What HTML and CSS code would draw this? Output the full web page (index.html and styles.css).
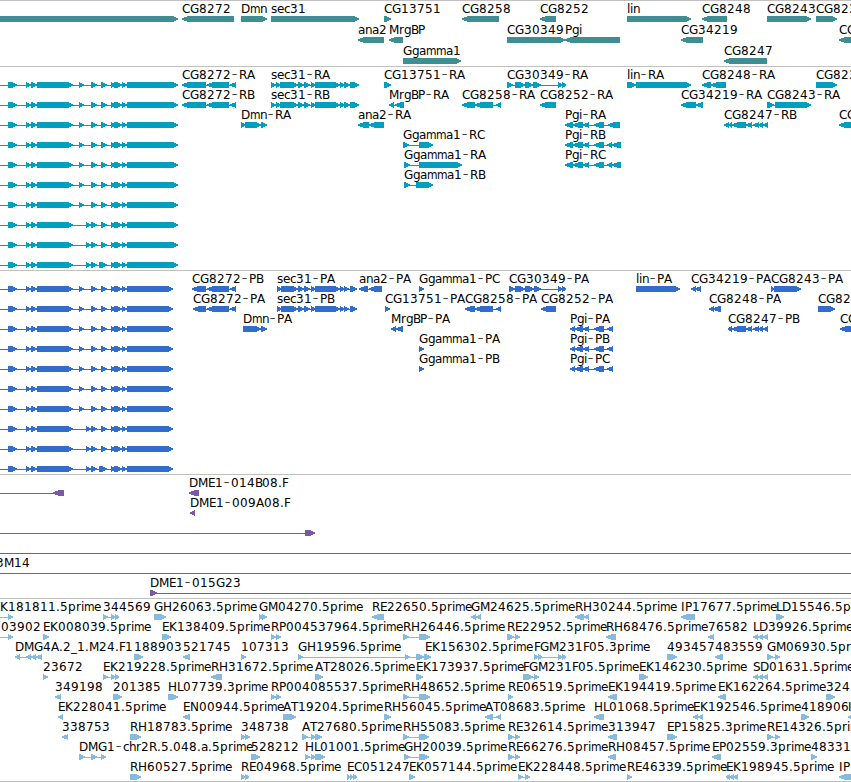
FILE: index.html
```html
<!DOCTYPE html>
<html lang="en">

<head>
  <meta charset="UTF-8">
  <title>Genome Tracks</title>
  <link rel="stylesheet" href="styles.css">
</head>

<body>
  <div class="browser">
    <svg class="track genes" id="genes"></svg>
    <svg class="track transcripts" id="transcripts"></svg>
    <svg class="track proteins" id="proteins"></svg>
    <svg class="track clones" id="clones"></svg>
    <svg class="track ests" id="ests"></svg>
  </div>
  <script src="tracks.js"></script>
</body>

</html>
```

FILE: styles.css
```css
body {
  margin: 0;
  background-color: #fff;
  overflow: hidden;
}

.browser {
  display: flex;
  flex-direction: column;
  width: 851px;
  border-bottom: 1px solid #c0c0c0;
}

.track {
  display: block;
  box-sizing: border-box;
  width: 851px;
  border-top: 1px solid #c0c0c0;
  overflow: hidden;
}

.track polygon,
.track rect {
  shape-rendering: crispEdges;
}

.track text {
  font-family: "DejaVu Sans", sans-serif;
  font-size: 12px;
  fill: #000;
}

.track .dash {
  font-size: 17px;
  font-weight: 200;
}

.track .narrow {
  font-stretch: condensed;
}

.genes {
  height: 66px;
  fill: #3f8e93;
}

.transcripts {
  height: 204px;
  fill: #009fc0;
}

.proteins {
  height: 204px;
  fill: #326ccc;
}

.clones {
  height: 124px;
  fill: #7859a8;
}

.ests {
  height: 183px;
  fill: #87bbdd;
}
```

FILE: tracks.js
```js
// One feature per line: row | strand | label | label x | blocks
const genes = `
0|>|||-20-178
0|<|CG8272|182|182-234
0|>|Dmn|241|241-267
0|>|sec31|271|271-359
0|>|CG13751|384|384-391
0|<|CG8258|462|462-499
0|<|CG8252|540|540-556
0|>|lin|627|627-691
0|<|CG8248|702|702-727
0|>|CG8243|767|767-811
0|>|CG8233|816|816-837
1|<|ana2|358|358-384
1|<|MrgBP|389|389-403
1|>|CG30349|507|507-565
1|<|Pgi|565|565-620
1|<|CG34219|681|681-703
1|<|CG8230|839|839-870
2|>|Ggamma1|403|403-461
2|<|CG8247|724|724-767`;

const transcripts = `
0|<|CG8272-RA|182|182-206 207-229 230-236
1|<|CG8272-RB|182|182-206 207-229 230-236
2|>|Dmn-RA|241|241-245 245-261 261-267
0|>|sec31-RA|271|271-276 276-280 280-298 298-304 304-310 311-315 315-340 340-344 344-350 350-359
1|>|sec31-RB|271|271-276 276-280 280-298 298-304 304-310 311-315 315-340 340-344 344-350 350-359
2|<|ana2-RA|358|358-369 369-384
0|>|CG13751-RA|384|384-391
1|<|MrgBP-RA|389|389-394 395-404
3|>|Ggamma1-RC|403|403-409 419-433
4|>|Ggamma1-RA|404|404-410 419-462
5|>|Ggamma1-RB|404|404-410 416-433
1|<|CG8258-RA|462|462-475 475-493 496-501
0|>|CG30349-RA|507|507-513 515-525 525-533 533-541 558-563 562-566
1|<|CG8252-RA|540|540-556
2|<|Pgi-RA|565|565-573 573-583 583-589 594-604 608-620
3|<|Pgi-RB|565|565-573 573-583 583-589 594-604 607-612 612-621
4|<|Pgi-RC|565|565-573 573-583 583-589 594-604 607-612 612-621
0|>|lin-RA|627|627-636 636-691
1|<|CG34219-RA|681|681-696 696-703
0|<|CG8248-RA|702|702-711 711-726
2|<|CG8247-RB|724|724-729 729-732 732-746 746-752 753-759 759-763 763-768
1|>|CG8243-RA|767|767-774 775-811
0|>|CG8233-RA|816|816-837
2|<|CG8230-RA|839|839-870`;

const proteins = `
0|<|CG8272-PB|192|192-206 207-229 230-236
1|<|CG8272-PA|193|193-206 207-229 230-236
2|>|Dmn-PA|243|243-261 261-267
0|>|sec31-PA|277|277-281 281-298 298-304 304-310 311-315 315-340 340-344 344-349 350-357
1|>|sec31-PB|277|277-281 281-298 298-304 304-310 311-315 315-340 340-344 344-349 350-357
0|<|ana2-PA|359|359-368 369-382
1|>|CG13751-PA|385|385-390
2|<|MrgBP-PA|391|391-396 396-403
0|>|Ggamma1-PC|419|419-424
3|>|Ggamma1-PA|419|419-424
4|>|Ggamma1-PB|419|419-424
1|<|CG8258-PA|465|465-475 475-493 496-501
0|>|CG30349-PA|509|509-515 515-525 525-534 534-541 558-563 562-566
1|<|CG8252-PA|541|541-556
2|<|Pgi-PA|570|570-575 575-583 583-589 594-604 607-613
3|<|Pgi-PB|570|570-575 575-583 583-589 594-604 607-613
4|<|Pgi-PC|570|570-575 575-583 583-589 594-604 607-613
0|>|lin-PA|636|636-680
0|<|CG34219-PA|691|691-696 695-701
1|<|CG8248-PA|709|709-714 713-721
2|<|CG8247-PB|728|728-732 732-746 746-752 753-759 759-763 763-768
0|>|CG8243-PA|771|771-774 774-801
1|>|CG8233-PA|818|818-835
2|<|CG8230-PA|840|840-870`;

const clones = `
0|<|||53-64 900-901
0|<|DME1-014B08.F|189|189-199
1|<|DME1-009A08.F|190|190-195
2|>|||-20--10 305-315
3|>|||-20--10 900-910
4|>|3M14|-4|-20--10 900-910
5|>|DME1-015G23|150|150-157 900-910`;

const ests = `
0|>|EK181811.5prime|-7|-20--10 8-13
0|>|344569|103|103-108 111-115 115-119
0|>|GH26063.5prime|154|154-166
0|>|GM04270.5prime|259|259-263 262-267
0|<|RE22650.5prime|372|372-384
0|<|GM24625.5prime|471|471-476 476-481
0|<|RH30244.5prime|575|575-584 584-589
0|<|IP17677.5prime|681|681-695
0|>|LD15546.5prime|776|776-784
1|>|03902|1|-20--10 8-13
1|>|EK008039.5prime|43|43-49
1|>|EK138409.5prime|162|162-171
1|>|RP004537964.5prime|271|271-276 276-281
1|>|RH26446.5prime|403|403-409 419-430
1|>|RE22952.5prime|507|507-514 515-520
1|<|RH68476.5prime|606|606-616
1|<|76582|708|708-714
1|<|LD39926.5prime|753|753-758 758-763 763-768
2|<|DMG4A.2_1.M24.F1|15|15-20 26-31 31-36 36-42
2|>|188903|134|134-143
2|<|521745|183|183-190
2|>|107313|241|241-246
2|>|GH19596.5prime|298|298-303 405-410 416-424 424-426
2|>|EK156302.5prime|425|425-431
2|>|FGM231F05.3prime|534|534-538 538-542 558-563 562-566
2|>|493457|667|667-677
2|<|483559|715|715-723
2|>|GM06930.5prime|767|767-773 775-780
3|>|23672|43|43-48
3|>|EK219228.5prime|103|103-108 111-115 115-119
3|<|RH31672.5prime|211|211-222
3|>|AT28026.5prime|315|315-323
3|>|EK173937.5prime|416|416-423
3|>|FGM231F05.5prime|523|523-533 534-539
3|>|EK146230.5prime|639|639-648
3|<|SD01631.5prime|753|753-758 758-763 763-768
4|<|349198|55|55-61
4|>|201385|113|113-122
4|>|HL07739.3prime|168|168-178
4|>|RP004085537.5prime|271|271-276 276-281
4|>|RH48652.5prime|403|403-409 419-430
4|>|RE06519.5prime|508|508-513
4|<|EK194419.5prime|608|608-617
4|<|EK162264.5prime|718|718-726
4|>|324|826|826-835
5|<|EK228041.5prime|58|58-63
5|<|EN00944.5prime|183|183-190
5|>|AT19204.5prime|283|283-296
5|>|RH56045.5prime|384|384-391
5|<|AT08683.5prime|485|485-493 496-501
5|<|HL01068.5prime|594|594-604
5|<|EK192546.5prime|693|693-698 698-703
5|>|418906|801|801-809
5|<|I|848|848-870
6|<|338753|62|62-68
6|>|RH18783.5prime|130|130-141
6|>|348738|241|241-245 245-250
6|>|AT27680.5prime|302|302-308 311-315 315-322
6|>|RH55083.5prime|403|403-409 419-429
6|>|RE32614.5prime|508|508-514 515-520
6|<|313947|608|608-617
6|>|EP15825.3prime|667|667-677
6|>|RE14326.5prime|767|767-773 775-780
7|>|DMG1-chr2R.5.048.a.5prime|79|79-85 91-97 101-106
7|>|528212|251|251-260
7|>|HL01001.5prime|305|305-310 311-315 315-325
7|>|GH20039.5prime|404|404-410 419-429
7|>|RE66276.5prime|508|508-514 515-520
7|<|RH08457.5prime|608|608-616
7|<|EP02559.3prime|712|712-721
7|>|48331|811|811-817
8|>|RH60527.5prime|130|130-141
8|>|RE04968.5prime|241|241-245 245-249
8|>|EC051247|347|347-350 350-353 353-357
8|>|EK057144.5prime|409|409-415
8|>|EK228448.5prime|518|518-523 525-530
8|>|RE46339.5prime|627|627-632
8|<|EK198945.5prime|726|726-730 730-734 734-738
8|<|IP|839|839-870`;

// Long transcript on the left edge, ten isoforms that differ in three exons
function isoforms(end) {
  const middle = ['79-84 91-97 101-107', '86-91 91-97 101-107', '86-91 91-97 99-107'];
  let lines = '';
  for (let row = 0; row < 10; row++) {
    const exons = middle[row < 7 ? 0 : row < 9 ? 1 : 2];
    lines += `\n${row}|>|||-20--10 8-17 26-31 31-37 37-73 ${exons} 111-115 114-122 122-127 127-${end}`;
  }
  return lines;
}

// Whole pixel character widths of the label font
const widths = {
  C: 8, G: 9, D: 9, M: 10, E: 7, K: 8, R: 8, A: 8, B: 7, P: 7, F: 6, H: 9, L: 6,
  N: 9, T: 7, S: 7, I: 4, '-': 8, '.': 4, _: 6,
  a: 7, c: 6, e: 7, g: 7, h: 7, i: 3, l: 3, m: 10, n: 7, p: 8, r: 5, s: 6
};

function drawLabel(label, x, y) {
  const xs = [];
  for (const c of label) {
    xs.push(c === '-' ? x + 0.5 : x);
    x += widths[c] || 8;
  }
  const text = label
    .replace(/-/g, '<tspan class="dash">-</tspan>')
    .replace(/m/g, '<tspan class="narrow">m</tspan>');
  return `<text x="${xs.join(' ')}" y="${y}">${text}</text>`;
}

function drawBlock(start, end, strand, y) {
  const tip = Math.min(6, end - start);
  const mid = tip / 2;
  if (strand === '>') {
    return `<polygon points="${start},${y} ${end - tip},${y} ${end - mid},${y + 1} ${end},${y + 2.5} ${end},${y + 3.5} ${end - mid},${y + 5} ${end - tip},${y + 6} ${start},${y + 6}"/>`;
  }
  return `<polygon points="${end},${y} ${start + tip},${y} ${start + mid},${y + 1} ${start},${y + 2.5} ${start},${y + 3.5} ${start + mid},${y + 5} ${start + tip},${y + 6} ${end},${y + 6}"/>`;
}

function drawTrack(id, data, pitch) {
  let shapes = '';
  let labels = '';
  for (const line of data.trim().split('\n')) {
    const [row, strand, label, x, blocks] = line.split('|');
    const top = row * pitch;
    const parts = [...blocks.matchAll(/(-?\d+)-(-?\d+)/g)].map(m => [+m[1], +m[2]]);
    let first = parts[0][0];
    let last = parts[parts.length - 1][1];
    // the first clone continues past the left edge
    if (id === 'clones' && !label && row === '0') {
      parts.pop();
      first = -20;
      last = 60;
    }
    shapes += `<rect x="${first}" y="${top + 18}" width="${last - first}" height="1"/>`;
    for (const [start, end] of parts) {
      shapes += drawBlock(start, end, strand, top + 15);
    }
    if (label) {
      labels += drawLabel(label, +x, top + 12);
    }
  }
  document.getElementById(id).innerHTML = shapes + labels;
}

drawTrack('genes', genes, 21);
drawTrack('transcripts', isoforms(178) + transcripts, 20);
drawTrack('proteins', isoforms(173) + proteins, 20);
drawTrack('clones', clones, 20);
drawTrack('ests', ests, 20);
```
